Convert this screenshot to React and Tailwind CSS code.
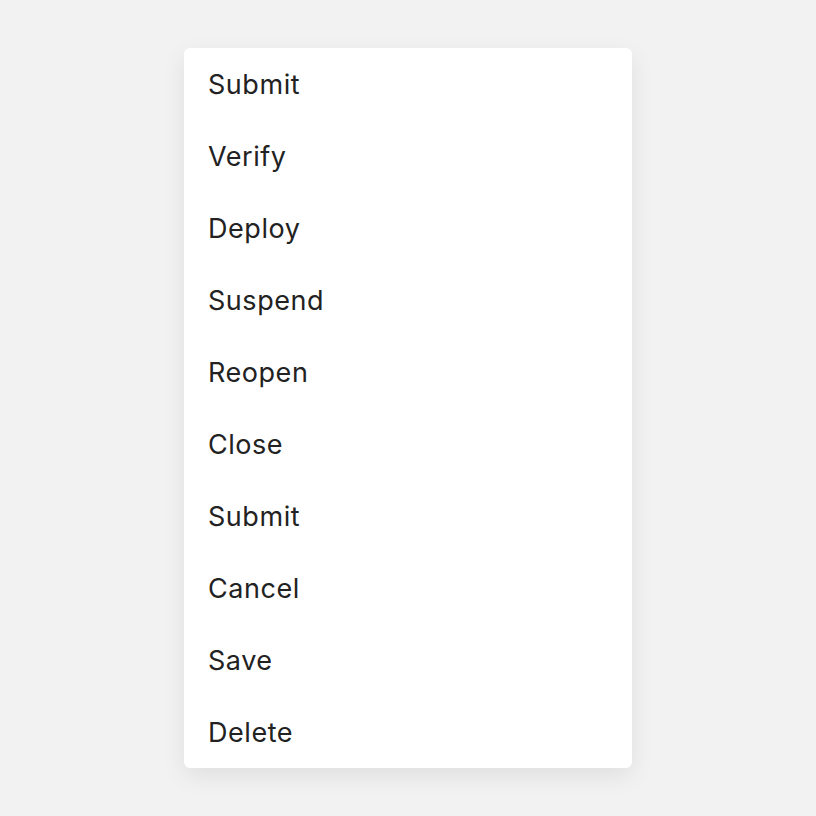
const ITEMS = ['Submit', 'Verify', 'Deploy', 'Suspend', 'Reopen', 'Close', 'Submit', 'Cancel', 'Save', 'Delete']

export default function App() {
  return (
    <div className="min-h-screen bg-[#f2f2f2] flex justify-center pt-12 font-['Inter',sans-serif]">
      <div className="w-[448px] h-fit bg-white rounded-md shadow-[0_8px_24px_rgba(0,0,0,0.08)]">
        {ITEMS.map((item, i) => (
          <div key={i} className="h-[72px] flex items-center px-6 pt-0.5 text-[27px] tracking-[0.02em] text-[#222]">
            {item}
          </div>
        ))}
      </div>
    </div>
  )
}
